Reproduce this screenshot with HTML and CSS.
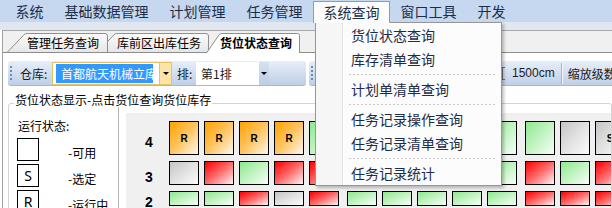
FILE: index.html
```html
<!DOCTYPE html>
<html lang="zh-CN">
<head>
<meta charset="utf-8">
<title>货位状态查询</title>
<link rel="stylesheet" href="styles.css">
</head>
<body>
<div class="menubar">
  <span class="mi">系统</span>
  <span class="mi">基础数据管理</span>
  <span class="mi">计划管理</span>
  <span class="mi">任务管理</span>
  <span class="mi active">系统查询</span>
  <span class="mi">窗口工具</span>
  <span class="mi">开发</span>
</div>
<div class="topstrip"></div>
<div class="tabctl">
  <div class="tabrow">
    <div class="tab t1">
      <svg viewBox="0 0 101 19" preserveAspectRatio="none">
        <defs>
          <linearGradient id="tg" x1="0" y1="0" x2="0" y2="1">
            <stop offset="0" stop-color="#fbfbfb"/>
            <stop offset="1" stop-color="#e6e6e6"/>
          </linearGradient>
        </defs>
        <path d="M0.5 19 L17 1.8 Q18.2 0.5 20 0.5 L98 0.5 Q100.5 0.5 100.5 3 L100.5 19" fill="url(#tg)" stroke="#8f8f8f"/>
      </svg>
      <span>管理任务查询</span>
    </div>
    <div class="tab t2">
      <svg viewBox="0 0 112 19" preserveAspectRatio="none">
        <path d="M0.5 19 L17 1.8 Q18.2 0.5 20 0.5 L109 0.5 Q111.5 0.5 111.5 3 L111.5 19" fill="url(#tg)" stroke="#8f8f8f"/>
      </svg>
      <span>库前区出库任务</span>
    </div>
    <div class="tab t3">
      <svg viewBox="0 0 94 20" preserveAspectRatio="none">
        <path d="M0.5 20 L13 1.8 Q14.2 0.5 16 0.5 L91.5 0.5 Q93.5 0.5 93.5 2.5 L93.5 20" fill="#ffffff" stroke="#8f8f8f"/>
      </svg>
      <span>货位状态查询</span>
    </div>
  </div>
  <div class="page">
    <div class="toolbars">
      <div class="toolbar tb1">
        <div class="grip"></div>
        <span class="lbl lbl-ck">仓库:</span>
        <div class="combo combo1">
          <div class="sel">首都航天机械立库</div>
          <div class="btn btn1"><i class="tri"></i></div>
        </div>
        <span class="lbl lbl-p">排:</span>
        <div class="combo combo2">
          <div class="ctext">第1排</div>
          <div class="btn btn2"><i class="tri"></i></div>
        </div>
      </div>
      <div class="toolbar tb2">
        <div class="grip"></div>
        <div class="bracket"></div>
        <span class="len">1500cm</span>
        <div class="tsep"></div>
        <span class="lbl">缩放级数</span>
      </div>
    </div>
    <div class="group">
      <div class="gtitle">货位状态显示-点击货位查询货位库存</div>
      <div class="legend">
        <div class="ltitle">运行状态:</div>
        <div class="lrow"><div class="lbox"></div><div class="ltxt">-可用</div></div>
        <div class="lrow"><div class="lbox">S</div><div class="ltxt">-选定</div></div>
        <div class="lrow"><div class="lbox">R</div><div class="ltxt">-运行中</div></div>
      </div>
      <div class="view">
        <div class="panel">
          <div class="row r4">
            <div class="rl">4</div>
            <div class="c o">R</div><div class="c o">R</div><div class="c o">R</div><div class="c o">R</div><div class="c g"></div>
            <div class="c g"></div><div class="c g"></div><div class="c y"></div><div class="c g"></div><div class="c g"></div>
            <div class="c g"></div><div class="c y"></div><div class="c y">S</div>
          </div>
          <div class="row r3">
            <div class="rl">3</div>
            <div class="c y"></div><div class="c r"></div><div class="c g"></div><div class="c r"></div><div class="c r"></div>
            <div class="c g"></div><div class="c r"></div><div class="c g"></div><div class="c g"></div><div class="c g"></div>
            <div class="c r"></div><div class="c g"></div><div class="c r"></div>
          </div>
          <div class="row r2">
            <div class="rl">2</div>
            <div class="c g"></div><div class="c g"></div><div class="c r"></div><div class="c y"></div><div class="c r"></div>
            <div class="c g"></div><div class="c g"></div><div class="c g"></div><div class="c g"></div><div class="c g"></div>
            <div class="c r"></div><div class="c r"></div><div class="c r"></div>
          </div>
        </div>
      </div>
    </div>
  </div>
</div>
<div class="dropdown">
  <div class="dd-item">货位状态查询</div>
  <div class="dd-item">库存清单查询</div>
  <div class="dd-sep"></div>
  <div class="dd-item">计划单清单查询</div>
  <div class="dd-sep"></div>
  <div class="dd-item">任务记录操作查询</div>
  <div class="dd-item">任务记录清单查询</div>
  <div class="dd-sep"></div>
  <div class="dd-item">任务记录统计</div>
</div>
</body>
</html>
```

FILE: styles.css
```css
* { box-sizing: border-box; }

body {
  margin: 0;
  width: 612px;
  height: 208px;
  overflow: hidden;
  position: relative;
  background: #ffffff;
  font-family: "Noto Sans CJK SC", "Noto Sans", sans-serif;
  color: #000;
}

/* menu bar */
.menubar {
  display: flex;
  align-items: flex-start;
  height: 22px;
  padding-left: 5px;
  background: #c6d8ef;
}
.mi {
  flex: none;
  height: 22px;
  padding: 0 10.5px;
  font-size: 14px;
  line-height: 22px;
  color: #1a2e4a;
  white-space: nowrap;
}
.mi.active {
  position: relative;
  z-index: 11;
  margin-top: 1px;
  padding: 0 9.5px;
  line-height: 20px;
  background: #fcfcfc;
  border: 1px solid #9a9a9a;
  border-bottom: none;
}

.topstrip {
  height: 8px;
  background: #e0e7f0;
}

/* tab control */
.tabctl {
  margin-left: 2px;
  border-left: 1px solid #a0a0a0;
}
.tabrow {
  display: flex;
  align-items: flex-end;
  height: 23px;
  padding-left: 4px;
  background: #f0f0f0;
  border-top: 1px solid #a9a9a9;
  border-bottom: 1px solid #8d8d8d;
}
.tab {
  position: relative;
  flex: none;
  height: 19px;
  font-size: 12px;
  line-height: 19px;
  white-space: nowrap;
}
.tab svg {
  position: absolute;
  left: 0;
  top: 0;
  width: 100%;
  height: 100%;
  overflow: visible;
}
.tab span { position: relative; }
.t1 { width: 101px; padding-left: 20px; z-index: 3; }
.t2 { width: 112px; padding-left: 20px; margin-left: -11px; z-index: 2; }
.t3 {
  width: 94px;
  height: 20px;
  padding-left: 14px;
  margin-left: -3px;
  margin-bottom: -1px;
  z-index: 4;
  font-weight: bold;
}

/* page */
.page {
  padding-top: 8px;
  height: 155px;
}
.toolbars {
  display: flex;
  gap: 3px;
  height: 25px;
  padding-left: 5px;
}
.toolbar {
  display: flex;
  align-items: center;
  height: 25px;
  background: linear-gradient(#e6eef9, #d3dff0 50%, #bed0e7);
  border-bottom: 1px solid #a3b8d6;
  border-radius: 3px;
  font-size: 12px;
  color: #1b1b1b;
  white-space: nowrap;
}
.tb1 { width: 298px; flex: none; padding-left: 2px; }
.tb2 { flex: 1; padding-left: 2px; }
.grip {
  flex: none;
  width: 2px;
  height: 15px;
  background: repeating-linear-gradient(to bottom, #6e89b5 0 2px, transparent 2px 4px);
}
.lbl { flex: none; }
.lbl-ck { width: 32px; margin-left: 8px; }
.lbl-p { width: 19px; margin-left: 5px; }

.combo {
  display: flex;
  align-self: flex-start;
  margin-top: 1px;
  height: 23px;
  background: #ffffff;
  flex: none;
}
.combo1 {
  width: 120px;
  border: 1px solid #e5c365;
}
.sel {
  width: 97px;
  height: 19px;
  margin: 1px 0 0 3px;
  padding-left: 5px;
  background: #3399ff;
  color: #ffffff;
  line-height: 19px;
  overflow: hidden;
}
.btn {
  margin-left: auto;
  display: flex;
  align-items: center;
  justify-content: center;
}
.btn1 {
  width: 12px;
  background: #fce4a6;
  border-left: 1px solid #e5c365;
}
.combo2 { width: 73px; }
.ctext {
  padding-left: 5px;
  line-height: 23px;
}
.btn2 {
  width: 10px;
  background: linear-gradient(#d6e1f0, #bccde4);
}
.tri {
  width: 0;
  height: 0;
  border-left: 3px solid transparent;
  border-right: 3px solid transparent;
  border-top: 3px solid #000;
}

.bracket {
  flex: none;
  width: 3px;
  height: 13px;
  margin-left: 189px;
  border: 1px solid #707070;
  border-right: none;
}
.len {
  margin-left: 7px;
  font-family: "Liberation Sans", sans-serif;
  font-size: 12px;
}
.tsep {
  flex: none;
  width: 2px;
  height: 21px;
  margin: 0 5px 0 6px;
  border-left: 1px solid #a2b5cf;
  border-right: 1px solid #f4f7fb;
}

/* group box */
.group {
  position: relative;
  display: flex;
  height: 120px;
  margin: 17px 0 0 5px;
  border: 1px solid #d4d4d4;
  border-radius: 3px;
}
.gtitle {
  position: absolute;
  left: 5px;
  top: -11px;
  padding: 0 1px;
  background: #ffffff;
  font-size: 12px;
  line-height: 14px;
  white-space: nowrap;
}
.legend {
  flex: none;
  width: 110px;
  padding: 15px 0 0 9px;
  border-right: 1px solid #b4b4b4;
  font-size: 12px;
}
.ltitle { line-height: 14px; }
.lrow {
  display: flex;
  margin-top: 3px;
}
.ltitle + .lrow { margin-top: 5px; }
.lbox {
  flex: none;
  width: 22px;
  height: 23px;
  margin-left: -1px;
  border: 1px solid #000;
  background: #fff;
  display: flex;
  align-items: center;
  justify-content: center;
  font-family: "Noto Sans", sans-serif;
  font-size: 14px;
}
.ltxt {
  margin-left: 29px;
  padding-top: 8px;
  line-height: 14px;
  white-space: nowrap;
}

.view {
  flex: 1;
  min-width: 0;
  padding: 9px 0 0 7px;
}
.panel {
  height: 100%;
  padding-top: 8px;
  display: flex;
  flex-direction: column;
  gap: 6px;
  background: #f0f0f0;
  overflow: hidden;
}
.row {
  display: flex;
  flex: none;
}
.r4 { height: 34px; }
.r3 { height: 24px; }
.r2 { height: 15px; }
.rl {
  flex: none;
  width: 43px;
  padding: 7px 0 0 3px;
  display: flex;
  align-items: center;
  justify-content: center;
  font: bold 14px "Liberation Sans", sans-serif;
}
.c {
  flex: none;
  width: 30px;
  height: 100%;
  margin-right: 5px;
  border: 1px solid #000;
  display: flex;
  align-items: center;
  justify-content: center;
  font: bold 10px "Liberation Sans", sans-serif;
}
.c:nth-child(6), .c:nth-child(11) { margin-right: 8px; }
.o { background: linear-gradient(to bottom right, #ffa200, #ffc462 50%, #fff8ee); }
.r { background: linear-gradient(to bottom right, #ff0000, #ff6a6a 50%, #fff4f4); }
.g { background: linear-gradient(to bottom right, #8ee88e, #c3f3c3 50%, #f6fff6); }
.y { background: linear-gradient(to bottom right, #c4c4c4, #e2e2e2 50%, #fbfbfb); }

/* dropdown menu */
.dropdown {
  position: absolute;
  left: 315px;
  top: 22px;
  z-index: 10;
  width: 187px;
  height: 164px;
  border: 1px solid #979797;
  background: linear-gradient(to right, #f6f6f6 0 26px, #e2e3e3 26px 27px, #ffffff 27px 28px, #fcfcfc 28px);
  box-shadow: 2px 2px 3px rgba(0, 0, 0, 0.25);
  font-size: 14px;
  color: #1d2c47;
}
.dd-item {
  height: 24px;
  line-height: 24px;
  padding-left: 35px;
  white-space: nowrap;
}
.dd-sep {
  height: 6px;
  display: flex;
  align-items: center;
  padding: 0 4px 0 33px;
}
.dd-sep::before {
  content: "";
  flex: 1;
  height: 1px;
  background: repeating-linear-gradient(to right, #c8c8c8 0 2px, transparent 2px 4px);
}
```
